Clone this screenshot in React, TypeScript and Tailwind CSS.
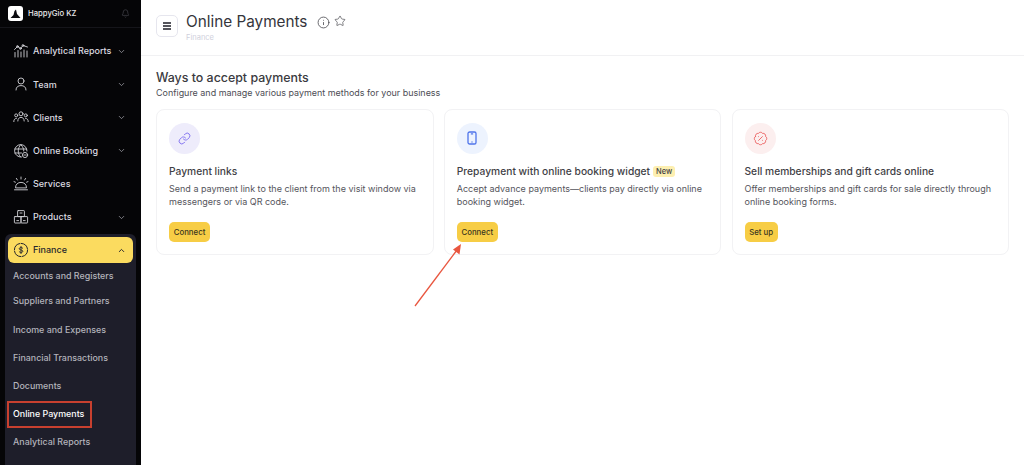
import { Bell, ChevronDown, ChevronUp, Info, Link, Star, BadgePercent } from "lucide-react";
import type { ReactNode } from "react";

function NavIcon({ children, className = "text-[#d4d4d8]" }: { children: ReactNode; className?: string }) {
  return (
    <svg className={`h-[16px] w-[16px] shrink-0 ${className}`} viewBox="0 0 16 16" fill="none" stroke="currentColor" strokeWidth="0.9" strokeLinecap="round" strokeLinejoin="round">
      {children}
    </svg>
  );
}

const ChartIcon = (
  <NavIcon>
    <path d="M1.5 6.5 L4.5 3.5 L7.5 5.5 L10 2.5 L14.5 4" />
    <circle cx="4.5" cy="3.5" r="0.9" />
    <circle cx="7.5" cy="5.5" r="0.9" />
    <circle cx="10" cy="2.5" r="0.9" />
    <path d="M2 9.5 V14 M5 7.5 V14 M8 9 V14 M11 7 V14 M14 8 V14" />
  </NavIcon>
);
const TeamIcon = (
  <NavIcon>
    <circle cx="8" cy="5" r="3" />
    <path d="M3 14 C3 10.8 5.2 9.6 8 9.6 C10.8 9.6 13 10.8 13 14" />
  </NavIcon>
);
const ClientsIcon = (
  <NavIcon>
    <circle cx="8" cy="4.8" r="2" />
    <path d="M4.8 12 C4.8 9.6 6.2 8.4 8 8.4 C9.8 8.4 11.2 9.6 11.2 12" />
    <circle cx="3.2" cy="6.4" r="1.5" />
    <path d="M0.8 12.6 C0.8 10.4 1.8 9.4 3.4 9.4" />
    <circle cx="12.8" cy="6.4" r="1.5" />
    <path d="M15.2 12.6 C15.2 10.4 14.2 9.4 12.6 9.4" />
  </NavIcon>
);
const GlobeIcon = (
  <NavIcon>
    <path d="M8.4 14 A6.2 6.2 0 1 1 14 8" />
    <path d="M2 6 H13.6 M2 10 H8.5 M7.6 1.8 C4.4 5.4 4.4 10.4 7.6 14 M8 1.8 C10 4 10.8 6 10.8 8" />
    <circle cx="12" cy="12" r="2.6" />
    <path d="M10.8 12 H13.2" />
  </NavIcon>
);
const ServicesIcon = (
  <NavIcon>
    <path d="M2.5 11.5 C2.5 8.2 5 6.4 8 6.4 C11 6.4 13.5 8.2 13.5 11.5 Z" />
    <path d="M1.5 13.8 H14.5 M8 1 V3 M3.4 2.4 L4.4 4 M12.6 2.4 L11.6 4 M1 5.6 L2.4 6.2 M15 5.6 L13.6 6.2" />
  </NavIcon>
);
const ProductsIcon = (
  <NavIcon>
    <rect x="4.6" y="1.6" width="6.8" height="6" rx="0.6" />
    <rect x="1.4" y="7.6" width="6.6" height="6.4" rx="0.6" />
    <rect x="8" y="7.6" width="6.6" height="6.4" rx="0.6" />
    <path d="M7 4 H9 M3.8 11.6 H5.6 M10.4 11.6 H12.2" />
  </NavIcon>
);
const FinanceIcon = (
  <NavIcon className="text-[#26262c]">
    <circle cx="8" cy="8" r="6.6" strokeWidth="1" strokeDasharray="9 1.4" />
    <path d="M9.8 6.2 C9.3 5.3 6.2 5.1 6.2 6.8 C6.2 8.4 9.9 7.6 9.9 9.2 C9.9 10.9 6.6 10.7 6.1 9.7 M8 4.4 V11.6" />
  </NavIcon>
);

function PhoneIcon({ className }: { className: string }) {
  return (
    <svg className={className} viewBox="0 0 10 14" fill="none" stroke="currentColor" strokeWidth="1.3" strokeLinecap="round">
      <rect x="1" y="1" width="8" height="12" rx="1.6" />
      <path d="M4.4 2.9 H5.6 M5 11 H5" />
    </svg>
  );
}

const NAV = [
  { label: "Analytical Reports", icon: ChartIcon, chevron: true },
  { label: "Team", icon: TeamIcon, chevron: true },
  { label: "Clients", icon: ClientsIcon, chevron: true },
  { label: "Online Booking", icon: GlobeIcon, chevron: true },
  { label: "Services", icon: ServicesIcon, chevron: false },
  { label: "Products", icon: ProductsIcon, chevron: true },
];

const SUB = [
  { label: "Accounts and Registers", cls: "h-[25px]" },
  { label: "Suppliers and Partners", cls: "h-[25px]" },
  { label: "Income and Expenses", cls: "mt-[3px] h-[28px]" },
  { label: "Financial Transactions", cls: "h-[28px]" },
  { label: "Documents", cls: "h-[28px]" },
  { label: "Online Payments", cls: "h-[28px]", active: true },
  { label: "Analytical Reports", cls: "h-[28px]" },
];

const CARDS = [
  {
    title: "Payment links",
    text: "Send a payment link to the client from the visit window via messengers or via QR code.",
    action: "Connect",
    icon: <Link className="h-[13px] w-[13px] text-[#7c6cf0]" strokeWidth={1.7} />,
    circle: "bg-[#eeecfb]",
  },
  {
    title: "Prepayment with online booking widget",
    text: "Accept advance payments—clients pay directly via online booking widget.",
    action: "Connect",
    icon: <PhoneIcon className="h-[14px] w-[10px] text-[#4f74ea]" />,
    circle: "bg-[#edf3fe]",
    badge: "New",
  },
  {
    title: "Sell memberships and gift cards online",
    text: "Offer memberships and gift cards for sale directly through online booking forms.",
    action: "Set up",
    icon: <BadgePercent className="h-[15px] w-[15px] text-[#ea5a5a]" strokeWidth={1.4} />,
    circle: "bg-[#fcefef]",
  },
];

export default function App() {
  return (
    <div className="relative flex h-[465px] w-[1024px] overflow-hidden bg-white font-['Inter',sans-serif]">
      <aside className="flex h-full w-[141px] shrink-0 flex-col overflow-hidden bg-[#050507]">
        <div className="flex h-[28px] shrink-0 items-center border-b border-[#15151a] pl-[7.5px] pr-[11px]">
          <div className="flex h-[15.5px] w-[15.5px] items-center justify-center rounded-[3px] bg-white">
            <svg width="11" height="10" viewBox="0 0 11 10">
              <path d="M6 0.5 L7 5 L10.5 9 H0.5 L3.5 6 L4.5 2 Z" fill="#0a0a0f" />
            </svg>
          </div>
          <span className="ml-[5px] text-[7.7px] font-medium text-[#e8e8ea]">HappyGio KZ</span>
          <Bell className="ml-auto h-[9px] w-[9px] text-[#3f3f46]" />
        </div>

        <nav className="flex shrink-0 flex-col pt-[6.5px]">
          {NAV.map(({ label, icon, chevron }) => (
            <div key={label} className="flex h-[33.2px] items-center pl-[13px] pr-[15px]">
              {icon}
              <span className="ml-[4px] text-[9px] font-medium text-[#dcdce0]">{label}</span>
              {chevron && <ChevronDown className="ml-auto h-[9px] w-[9px] text-[#a1a1aa]" />}
            </div>
          ))}
        </nav>

        <div className="ml-[5px] mt-[0.5px] w-[131px] grow rounded-t-[6px] bg-[#1e1e2a] px-[3px] pt-[3px]">
          <div className="flex h-[26px] items-center rounded-[6px] bg-[#fbdb5f] pl-[5px] pr-[7px]">
            {FinanceIcon}
            <span className="ml-[4px] text-[9px] font-medium text-[#26262c]">Finance</span>
            <ChevronUp className="ml-auto h-[9px] w-[9px] text-[#26262c]" strokeWidth={2.5} />
          </div>
          <div className="flex flex-col">
            {SUB.map((item) => (
              <div
                key={item.label}
                className={`flex items-center pl-[5px] text-[8.9px] font-medium ${item.cls} ${item.active ? "text-white" : "text-[#b4b4bc]"}`}
              >
                {item.label}
              </div>
            ))}
          </div>
        </div>
      </aside>

      <main className="flex min-w-0 grow flex-col">
        <header className="flex h-[56px] shrink-0 items-start border-b border-[#f1f1f3] pl-[15px] pt-[11px]">
          <button className="mt-[4px] flex h-[22px] w-[22px] items-center justify-center rounded-[5px] border border-[#e6e6ee] bg-white">
            <span className="flex flex-col gap-[1.5px]">
              <span className="h-[1.5px] w-[8px] bg-[#55555c]" />
              <span className="h-[1.5px] w-[8px] bg-[#55555c]" />
              <span className="h-[1.5px] w-[8px] bg-[#55555c]" />
            </span>
          </button>
          <div className="ml-[8px]">
            <div className="flex items-center">
              <h1 className="text-[15.3px] leading-[22px] font-normal text-[#35353b]">Online Payments</h1>
              <Info className="ml-[9.5px] h-[13px] w-[13px] text-[#4a4a50]" strokeWidth={1.5} />
              <Star className="ml-[4px] h-[12px] w-[12px] -translate-y-[1px] text-[#4a4a50]" strokeWidth={1.4} />
            </div>
            <div className="text-[7.5px] leading-[10px] text-[#d0d0dc]">Finance</div>
          </div>
        </header>

        <section className="pl-[15px] pr-[15px] pt-[14px]">
          <h2 className="text-[12.4px] leading-[16px] font-medium text-[#3a3a40]">Ways to accept payments</h2>
          <p className="text-[8.95px] leading-[13px] text-[#4c4c54]">Configure and manage various payment methods for your business</p>

          <div className="mt-[10px] flex gap-[10.25px]">
            {CARDS.map(({ title, text, action, icon, circle, badge }) => (
              <div key={title} className="h-[146px] w-[277.5px] shrink-0 rounded-[8px] border border-[#f2f2f4] pl-[12px] pr-[12px] pt-[12.5px]">
                <div className={`flex h-[31px] w-[31px] items-center justify-center rounded-full ${circle}`}>{icon}</div>
                <div className="mt-[10.5px] flex h-[15px] items-center">
                  <h3 className="text-[10.25px] font-medium text-[#3f3f46]">{title}</h3>
                  {badge && (
                    <span className="ml-[3px] rounded-[3px] bg-[#fdefb0] px-[3px] text-[7.5px] leading-[11.5px] font-medium text-[#3f3f46]">{badge}</span>
                  )}
                </div>
                <p className="mt-[2.5px] text-[9px] leading-[13px] text-[#55555c]">{text}</p>
                <button className="mt-[14px] flex h-[20px] items-center rounded-[5px] bg-[#f7cd45] px-[4.75px] pt-[2px] text-[7.8px] font-medium text-[#3a3520]">{action}</button>
              </div>
            ))}
          </div>
        </section>
      </main>

      <svg className="absolute left-[410px] top-[240px]" width="60" height="70" viewBox="0 0 60 70" fill="none">
        <path d="M5 66 L47 10" stroke="#e9563f" strokeWidth="1.3" />
        <path d="M51 4 L49.5 14.5 L43 9.5 Z" fill="#e9563f" />
      </svg>
      <div className="absolute left-[7px] top-[401px] h-[27px] w-[85px] border-2 border-[#c8402f]" />
    </div>
  );
}
